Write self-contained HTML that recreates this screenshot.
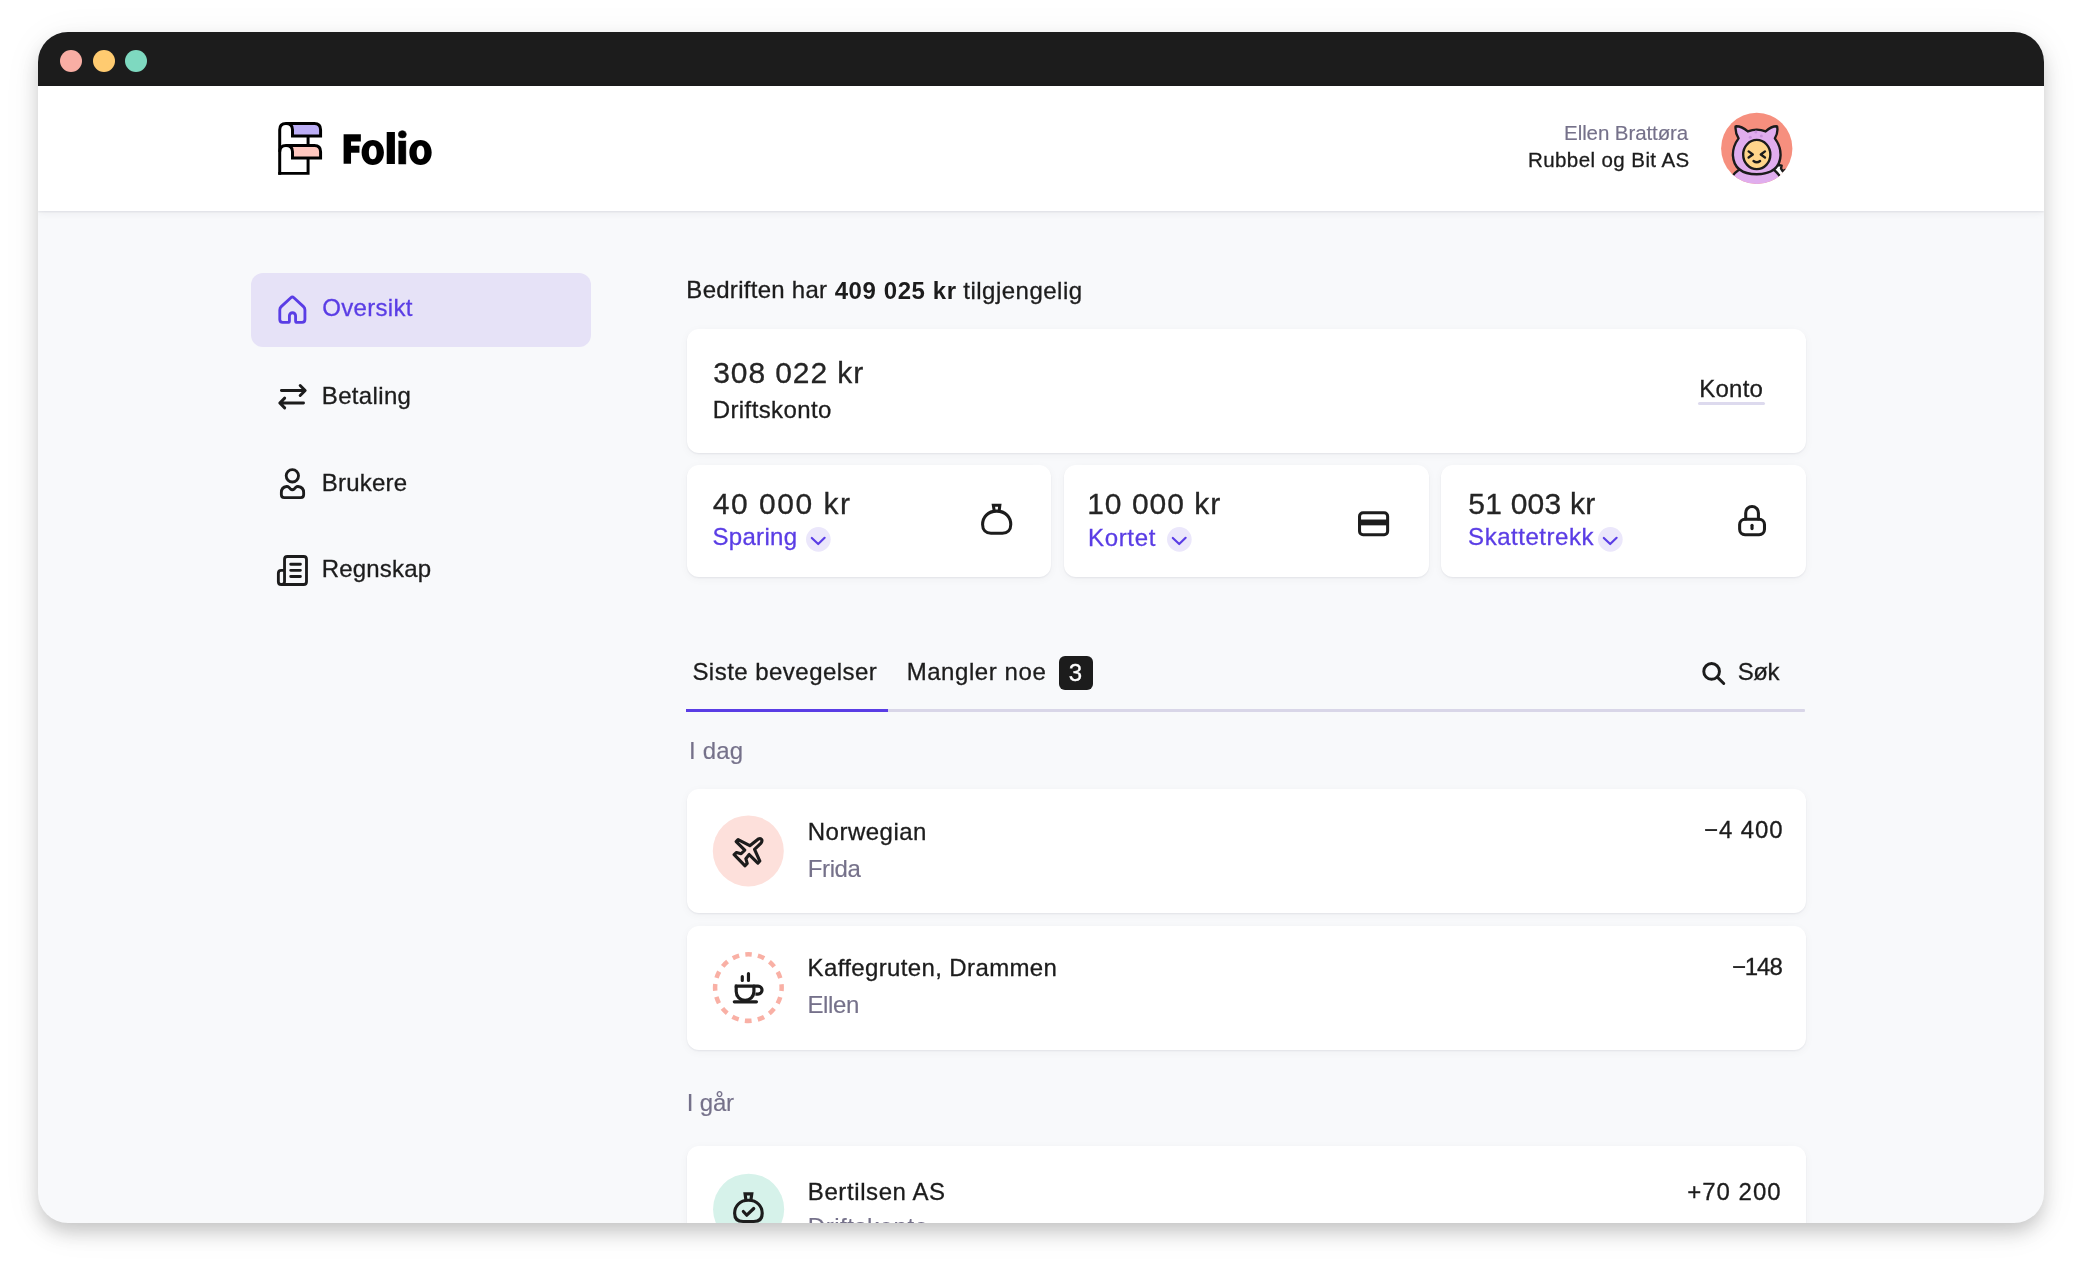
<!DOCTYPE html>
<html lang="nb">
<head>
<meta charset="utf-8">
<title>Folio</title>
<style>
*{box-sizing:border-box;margin:0;padding:0}
html,body{width:2080px;height:1265px;background:#fff;overflow:hidden}
body{font-family:"Liberation Sans",sans-serif;color:#1c1c1c;position:relative}
.win{position:absolute;left:38px;top:32px;width:2006px;height:1191px;border-radius:30px;overflow:hidden;background:#f8f9fb;box-shadow:0 10px 20px -2px rgba(0,0,0,.21),0 6px 40px rgba(0,0,0,.06)}
.abs{position:absolute}
/* coordinates inside .page are page coordinates: .page is shifted by -38,-32 */
.page{position:absolute;left:-38px;top:-32px;width:2080px;height:1265px;will-change:transform}
.tbar{position:absolute;left:38px;top:32px;width:2006px;height:54px;background:#1c1c1c}
.dot{position:absolute;width:22px;height:22px;border-radius:50%;top:50px}
.hdr{position:absolute;left:38px;top:86px;width:2006px;height:124.8px;background:#fff;box-shadow:0 1px 2px rgba(40,40,70,.09),0 2px 8px rgba(40,40,70,.06)}
.t{position:absolute;white-space:nowrap;line-height:1;transform-origin:0 0;-webkit-text-stroke:.3px currentColor}
.card{position:absolute;background:#fff;border-radius:12px;box-shadow:0 1px 2px rgba(30,30,60,.08),0 2px 10px rgba(30,30,60,.04)}
.pur{color:#5a3de5}
.gr{color:#75718a}
svg{position:absolute;overflow:visible}
.ic{fill:none;stroke:#1c1c1c;stroke-linecap:round;stroke-linejoin:round}
</style>
</head>
<body>
<div class="win"><div class="page">
<div class="tbar"></div>
<div class="dot" style="left:60px;background:#f9aea4"></div>
<div class="dot" style="left:92.5px;background:#ffcb70"></div>
<div class="dot" style="left:125px;background:#7ed9c0"></div>
<div class="hdr"></div>
<!-- logo: drawn in zoom coords (origin 260,100 scale 10.4) -->
<svg style="left:260px;top:100px" width="200" height="120" viewBox="0 0 2080 1248">
  <path d="M338,375 V312 Q338,262 300,245 H565 Q630,245 630,310 V375 Z" fill="#bcaef6"/>
  <path d="M338,603 V540 Q338,490 300,473 H565 Q630,473 630,538 V603 Z" fill="#ffc7bf"/>
  <g fill="none" stroke="#000" stroke-width="31" stroke-linejoin="miter" stroke-linecap="butt">
    <path d="M205,778 V310 Q205,245 270,245 H565 Q630,245 630,310 V375 H338 V310 Q338,245 271,245"/>
    <path d="M205,538 Q205,473 270,473 H565 Q630,473 630,538 V603 H338 V538 Q338,473 271,473"/>
    <path d="M500,375 V473"/>
    <path d="M190,763 H500 V603"/>
  </g>
</svg>
<!-- avatar: zoom coords (origin 1700,100 scale 12.65) -->
<svg style="left:1700px;top:100px" width="120" height="100" viewBox="0 0 1518 1265">
  <defs><clipPath id="avc"><circle cx="718" cy="612" r="451"/></clipPath></defs>
  <circle cx="718" cy="612" r="451" fill="#f68f7e"/>
  <g clip-path="url(#avc)" stroke="#1c1c1c" stroke-width="30" stroke-linejoin="round" stroke-linecap="round">
    <!-- tail -->
    <path d="M936,852 L992,822 L1033,830 L1025,868 L1047,901 L1080,884 L1150,960 L1020,975 L930,885 Z" fill="#fff"/>
    <!-- body -->
    <path d="M380,1010 Q440,900 520,870 L920,870 Q960,900 1050,1010 L1050,1200 L380,1200 Z" fill="#e0adee"/>
    <!-- hood with ears -->
    <path d="M450,333 Q522,328 605,398 Q718,350 830,398 Q908,328 975,333 Q992,415 947,485 Q1022,585 1019,700 Q1006,936 718,939 Q430,936 416,700 Q413,585 488,485 Q443,415 450,333 Z" fill="#e0adee"/>
    <!-- face -->
    <ellipse cx="718" cy="690" rx="172" ry="185" fill="#ffd58a"/>
    <path d="M615,650 L668,690 L615,727" fill="none"/>
    <path d="M822,650 L769,690 L822,727" fill="none"/>
    <path d="M677,772 Q718,805 760,772" fill="none"/>
  </g>
  <g fill="#c993dd"><circle cx="706" cy="406" r="19"/><circle cx="636" cy="470" r="19"/><circle cx="776" cy="456" r="19"/></g>
</svg>

<div class="abs" style="left:250.5px;top:272.5px;width:340.6px;height:74.5px;border-radius:12px;background:#e6e2f7"></div>
<!-- nav icons, zoom coords scale 21.083 (60px -> 1265) -->
<svg style="left:262px;top:280px" width="60" height="60" viewBox="0 0 1265 1265"><path class="ic" style="stroke:#5a3de5" stroke-width="60" d="M405,562 L608,374 Q640,345 672,374 L875,562 Q905,590 905,632 V835 Q905,895 845,895 H745 Q708,895 708,858 V755 A65,65 0 0 0 578,755 V858 Q578,895 541,895 H435 Q375,895 375,835 V632 Q375,590 405,562 Z"/></svg>
<svg style="left:262px;top:366px" width="60" height="60" viewBox="0 0 1265 1265"><path class="ic" stroke-width="62" d="M410,517 H900 M805,412 L910,517 L805,622 M875,780 H385 M478,678 L375,780 L478,883"/></svg>
<svg style="left:262px;top:453px" width="60" height="60" viewBox="0 0 1265 1265"><g class="ic" stroke-width="60"><circle cx="640" cy="482" r="130"/><path d="M468,940 Q408,940 408,880 V835 Q408,722 520,707 Q545,704 566,724 L598,756 Q640,796 682,756 L714,724 Q735,704 760,707 Q878,722 878,835 V880 Q878,940 818,940 Z"/></g></svg>
<svg style="left:262px;top:540px" width="60" height="60" viewBox="0 0 1265 1265"><g class="ic" stroke-width="60"><path d="M475,640 H405 Q345,640 345,700 V878 Q345,938 405,938 H878 Q938,938 938,878 V408 Q938,348 878,348 H535 Q475,348 475,408 V878 Q475,938 415,938"/><path d="M605,512 H810 M605,640 H810 M605,770 H810"/></g></svg>

<div class="card" style="left:686.5px;top:328.5px;width:1119.5px;height:124px"></div>
<div class="card" style="left:686.5px;top:465px;width:364.1px;height:111.5px"></div>
<div class="card" style="left:1063.5px;top:465px;width:365.2px;height:111.5px"></div>
<div class="card" style="left:1441.3px;top:465px;width:364.7px;height:111.5px"></div>
<div class="abs" style="left:1697.8px;top:401.7px;width:67.2px;height:3.2px;border-radius:1.6px;background:#dddaee"></div>
<!-- chevrons -->
<svg style="left:788px;top:509px" width="60" height="60" viewBox="0 0 1265 1265"><circle cx="640" cy="640" r="260" fill="#ebe7fb"/><path class="ic" style="stroke:#5a3de5" stroke-width="46" d="M502,610 L637,738 L772,608"/></svg>
<svg style="left:1149.4px;top:509px" width="60" height="60" viewBox="0 0 1265 1265"><circle cx="640" cy="640" r="260" fill="#ebe7fb"/><path class="ic" style="stroke:#5a3de5" stroke-width="46" d="M502,610 L637,738 L772,608"/></svg>
<svg style="left:1579.9px;top:509px" width="60" height="60" viewBox="0 0 1265 1265"><circle cx="640" cy="640" r="260" fill="#ebe7fb"/><path class="ic" style="stroke:#5a3de5" stroke-width="46" d="M502,610 L637,738 L772,608"/></svg>
<!-- purse: zoom coords origin 960,480 scale 15.81 -->
<svg style="left:960px;top:480px" width="80" height="80" viewBox="0 0 1265 1265"><g class="ic" stroke-width="48"><path d="M580,492 C440,492 357,590 357,705 C357,790 410,842 490,842 H670 C750,842 803,790 803,705 C803,590 720,492 580,492 Z"/><path d="M540,480 L527,398 H630 L620,480" stroke-linejoin="miter"/></g></svg>
<!-- card: origin 1335,480 -->
<svg style="left:1335px;top:480px" width="80" height="80" viewBox="0 0 1265 1265"><g class="ic" stroke-width="48"><rect x="388" y="518" width="444" height="347" rx="55"/></g><rect x="388" y="625" width="444" height="92" fill="#1c1c1c"/></svg>
<!-- lock: origin 1712,480 -->
<svg style="left:1712px;top:480px" width="80" height="80" viewBox="0 0 1265 1265"><g class="ic" stroke-width="48"><rect x="437" y="620" width="393" height="245" rx="85"/><path d="M533,615 V520 A100,100 0 0 1 734,520 V615"/><path d="M633,715 V768" stroke-width="50"/></g></svg>

<div class="abs" style="left:686.4px;top:708.7px;width:1118.4px;height:3px;background:#d9d6e8;border-radius:1px"></div>
<div class="abs" style="left:686.4px;top:708.6px;width:201.6px;height:3.2px;background:#5a3de5"></div>
<div class="abs" style="left:1058.5px;top:655.7px;width:34.3px;height:34px;border-radius:6px;background:#1c1c1c"></div>
<!-- search: origin 1684,642 scale 21.083 -->
<svg style="left:1684px;top:642px" width="60" height="60" viewBox="0 0 1265 1265"><g class="ic" stroke-width="62"><circle cx="582" cy="620" r="165"/><path d="M702,740 L838,876"/></g></svg>

<div class="card" style="left:686.5px;top:789.3px;width:1119.5px;height:123.5px"></div>
<div class="card" style="left:686.5px;top:926.2px;width:1119.5px;height:123.8px"></div>
<div class="card" style="left:686.5px;top:1146.2px;width:1119.5px;height:123.5px"></div>
<!-- plane: origin 700,800 scale 12.65 -->
<svg style="left:700px;top:800px" width="100" height="100" viewBox="0 0 1265 1265"><circle cx="611" cy="644" r="449" fill="#fde0db"/><path class="ic" stroke-width="40" d="M630,578 L738,492 Q768,480 780,500 Q790,520 772,545 L690,624 L757,772 L732,798 L622,690 L580,742 L597,802 L570,832 L432,692 L462,664 L520,680 L566,634 L458,526 L482,500 Z"/></svg>
<!-- coffee: origin 700,937 -->
<svg style="left:700px;top:937px" width="100" height="100" viewBox="0 0 1265 1265"><circle cx="612" cy="640" r="421" fill="none" stroke="#f9b0a5" stroke-width="57" stroke-dasharray="86 79.3" stroke-dashoffset="43" transform="rotate(-90 612 640)"/><g class="ic" stroke-width="40"><path d="M535,500 V550 M613,462 V550"/><path d="M440,622 H735 A50,50 0 0 1 735,722 H700" stroke-linecap="butt"/><path d="M458,622 V690 A112,112 0 0 0 682,690 V622"/><path d="M434,820 H714"/></g></svg>
<!-- purse check: origin 700,1150 -->
<svg style="left:700px;top:1150px" width="100" height="100" viewBox="0 0 1265 1265"><circle cx="615" cy="749" r="450" fill="#d6f2ea"/><g class="ic" stroke-width="40"><path d="M612,636 C500,636 438,715 438,800 C438,870 480,905 545,905 H680 C745,905 787,870 787,800 C787,715 725,636 612,636 Z"/><path d="M580,625 L570,556 H655 L645,625" stroke-linejoin="miter"/><path d="M548,778 L592,825 L680,740" stroke-width="40"/></g></svg>

<div id="folio" aria-label="Folio"><span class="t" style="left:0;top:0;font-size:40px;color:#000;font-weight:900;transform:translate(341.50px,128.73px) scale(0.8302,0.9289);font-family:'Noto Sans CJK JP','Liberation Sans',sans-serif;-webkit-text-stroke:1.8px #000;">F</span><span class="t" style="left:0;top:0;font-size:40px;color:#000;font-weight:900;transform:translate(359.95px,126.72px) scale(1.0034,1.0153);font-family:'Noto Sans CJK JP','Liberation Sans',sans-serif;-webkit-text-stroke:0;">o</span><span class="t" style="left:0;top:0;font-size:40px;color:#000;font-weight:700;transform:translate(384.73px,128.55px) scale(1.0961,1.0126);font-family:'Liberation Sans',sans-serif;-webkit-text-stroke:2px #000;">l</span><span class="t" style="left:0;top:0;font-size:40px;color:#000;font-weight:900;transform:translate(396.05px,126.85px) scale(0.9844,0.9915);font-family:'Noto Sans CJK JP','Liberation Sans',sans-serif;-webkit-text-stroke:.6px #000;">i</span><span class="t" style="left:0;top:0;font-size:40px;color:#000;font-weight:900;transform:translate(407.85px,126.72px) scale(1.0034,1.0153);font-family:'Noto Sans CJK JP','Liberation Sans',sans-serif;-webkit-text-stroke:0;">o</span></div>
<div class="t" id="ellen" style="left:1564.10px;top:122.70px;font-size:20.5px;color:#75718a;letter-spacing:-0.092px;-webkit-text-stroke:.15px currentColor;">Ellen Brattøra</div>
<div class="t" id="rubbel" style="left:1527.95px;top:150.30px;font-size:20.5px;color:#1c1c1c;letter-spacing:0.42px;">Rubbel og Bit AS</div>
<div class="t" id="n1" style="left:322.25px;top:296.40px;font-size:24px;color:#5a3de5;letter-spacing:0.3px;">Oversikt</div>
<div class="t" id="n2" style="left:321.80px;top:383.60px;font-size:24px;color:#1c1c1c;letter-spacing:0.343px;">Betaling</div>
<div class="t" id="n3" style="left:321.70px;top:470.70px;font-size:24px;color:#1c1c1c;letter-spacing:0.233px;">Brukere</div>
<div class="t" id="n4" style="left:321.75px;top:557.10px;font-size:24px;color:#1c1c1c;letter-spacing:0.186px;">Regnskap</div>
<div class="t" id="h1" style="left:686.35px;top:278.00px;font-size:24px;color:#1c1c1c;letter-spacing:0.275px;">Bedriften har</div>
<div class="t" id="h2" style="left:834.65px;top:278.50px;font-size:24px;color:#1c1c1c;font-weight:700;letter-spacing:0.589px;-webkit-text-stroke:0;">409 025 kr</div>
<div class="t" id="h3" style="left:963.30px;top:278.50px;font-size:24px;color:#1c1c1c;letter-spacing:0.491px;">tilgjengelig</div>
<div class="t" id="a1" style="left:713.20px;top:357.70px;font-size:30px;color:#252525;letter-spacing:0.911px;">308 022 kr</div>
<div class="t" id="a2" style="left:712.75px;top:398.40px;font-size:24px;color:#1c1c1c;letter-spacing:0.39px;">Driftskonto</div>
<div class="t" id="konto" style="left:1699.15px;top:377.20px;font-size:24px;color:#1c1c1c;letter-spacing:0.275px;">Konto</div>
<div class="t" id="b1" style="left:712.80px;top:488.70px;font-size:30px;color:#252525;letter-spacing:1.525px;">40 000 kr</div>
<div class="t" id="b2" style="left:712.45px;top:525.30px;font-size:24px;color:#5a3de5;letter-spacing:0.317px;">Sparing</div>
<div class="t" id="c1" style="left:1087.20px;top:488.70px;font-size:30px;color:#252525;letter-spacing:1.0px;">10 000 kr</div>
<div class="t" id="c2" style="left:1088.10px;top:526.10px;font-size:24px;color:#5a3de5;letter-spacing:0.64px;">Kortet</div>
<div class="t" id="d1" style="left:1468.30px;top:488.70px;font-size:30px;color:#252525;letter-spacing:0.225px;">51 003 kr</div>
<div class="t" id="d2" style="left:1468.10px;top:524.70px;font-size:24px;color:#5a3de5;letter-spacing:0.54px;">Skattetrekk</div>
<div class="t" id="tab1" style="left:692.40px;top:659.90px;font-size:24px;color:#1c1c1c;letter-spacing:0.467px;">Siste bevegelser</div>
<div class="t" id="tab2" style="left:906.65px;top:660.10px;font-size:24px;color:#1c1c1c;letter-spacing:0.57px;">Mangler noe</div>
<div class="t" id="badge" style="left:1068.70px;top:661.30px;font-size:24px;color:#fff;">3</div>
<div class="t" id="sok" style="left:1737.70px;top:659.90px;font-size:24px;color:#1c1c1c;letter-spacing:-0.4px;">Søk</div>
<div class="t" id="idag" style="left:689.10px;top:738.90px;font-size:24px;color:#75718a;letter-spacing:0.15px;-webkit-text-stroke:.15px currentColor;">I dag</div>
<div class="t" id="t1a" style="left:807.75px;top:819.70px;font-size:24px;color:#1c1c1c;letter-spacing:0.488px;">Norwegian</div>
<div class="t" id="t1b" style="left:807.75px;top:856.60px;font-size:24px;color:#75718a;letter-spacing:-0.375px;-webkit-text-stroke:.15px currentColor;">Frida</div>
<div class="t" id="t1c" style="left:1703.95px;top:818.00px;font-size:24px;color:#1c1c1c;letter-spacing:0.94px;">−4 400</div>
<div class="t" id="t2a" style="left:807.60px;top:956.40px;font-size:24px;color:#1c1c1c;letter-spacing:0.368px;">Kaffegruten, Drammen</div>
<div class="t" id="t2b" style="left:807.40px;top:992.90px;font-size:24px;color:#75718a;letter-spacing:-0.35px;-webkit-text-stroke:.15px currentColor;">Ellen</div>
<div class="t" id="t2c" style="left:1731.90px;top:955.00px;font-size:24px;color:#1c1c1c;letter-spacing:-1.067px;">−148</div>
<div class="t" id="igar" style="left:686.75px;top:1091.10px;font-size:24px;color:#75718a;letter-spacing:-0.175px;-webkit-text-stroke:.15px currentColor;">I går</div>
<div class="t" id="t3a" style="left:807.80px;top:1180.00px;font-size:24px;color:#1c1c1c;letter-spacing:0.6px;">Bertilsen AS</div>
<div class="t" id="t3b" style="left:807.75px;top:1215.00px;font-size:24px;color:#75718a;letter-spacing:0.55px;-webkit-text-stroke:.15px currentColor;">Driftskonto</div>
<div class="t" id="t3c" style="left:1687.20px;top:1179.90px;font-size:24px;color:#1c1c1c;letter-spacing:1.0px;">+70 200</div>
</div></div>
</body>
</html>
